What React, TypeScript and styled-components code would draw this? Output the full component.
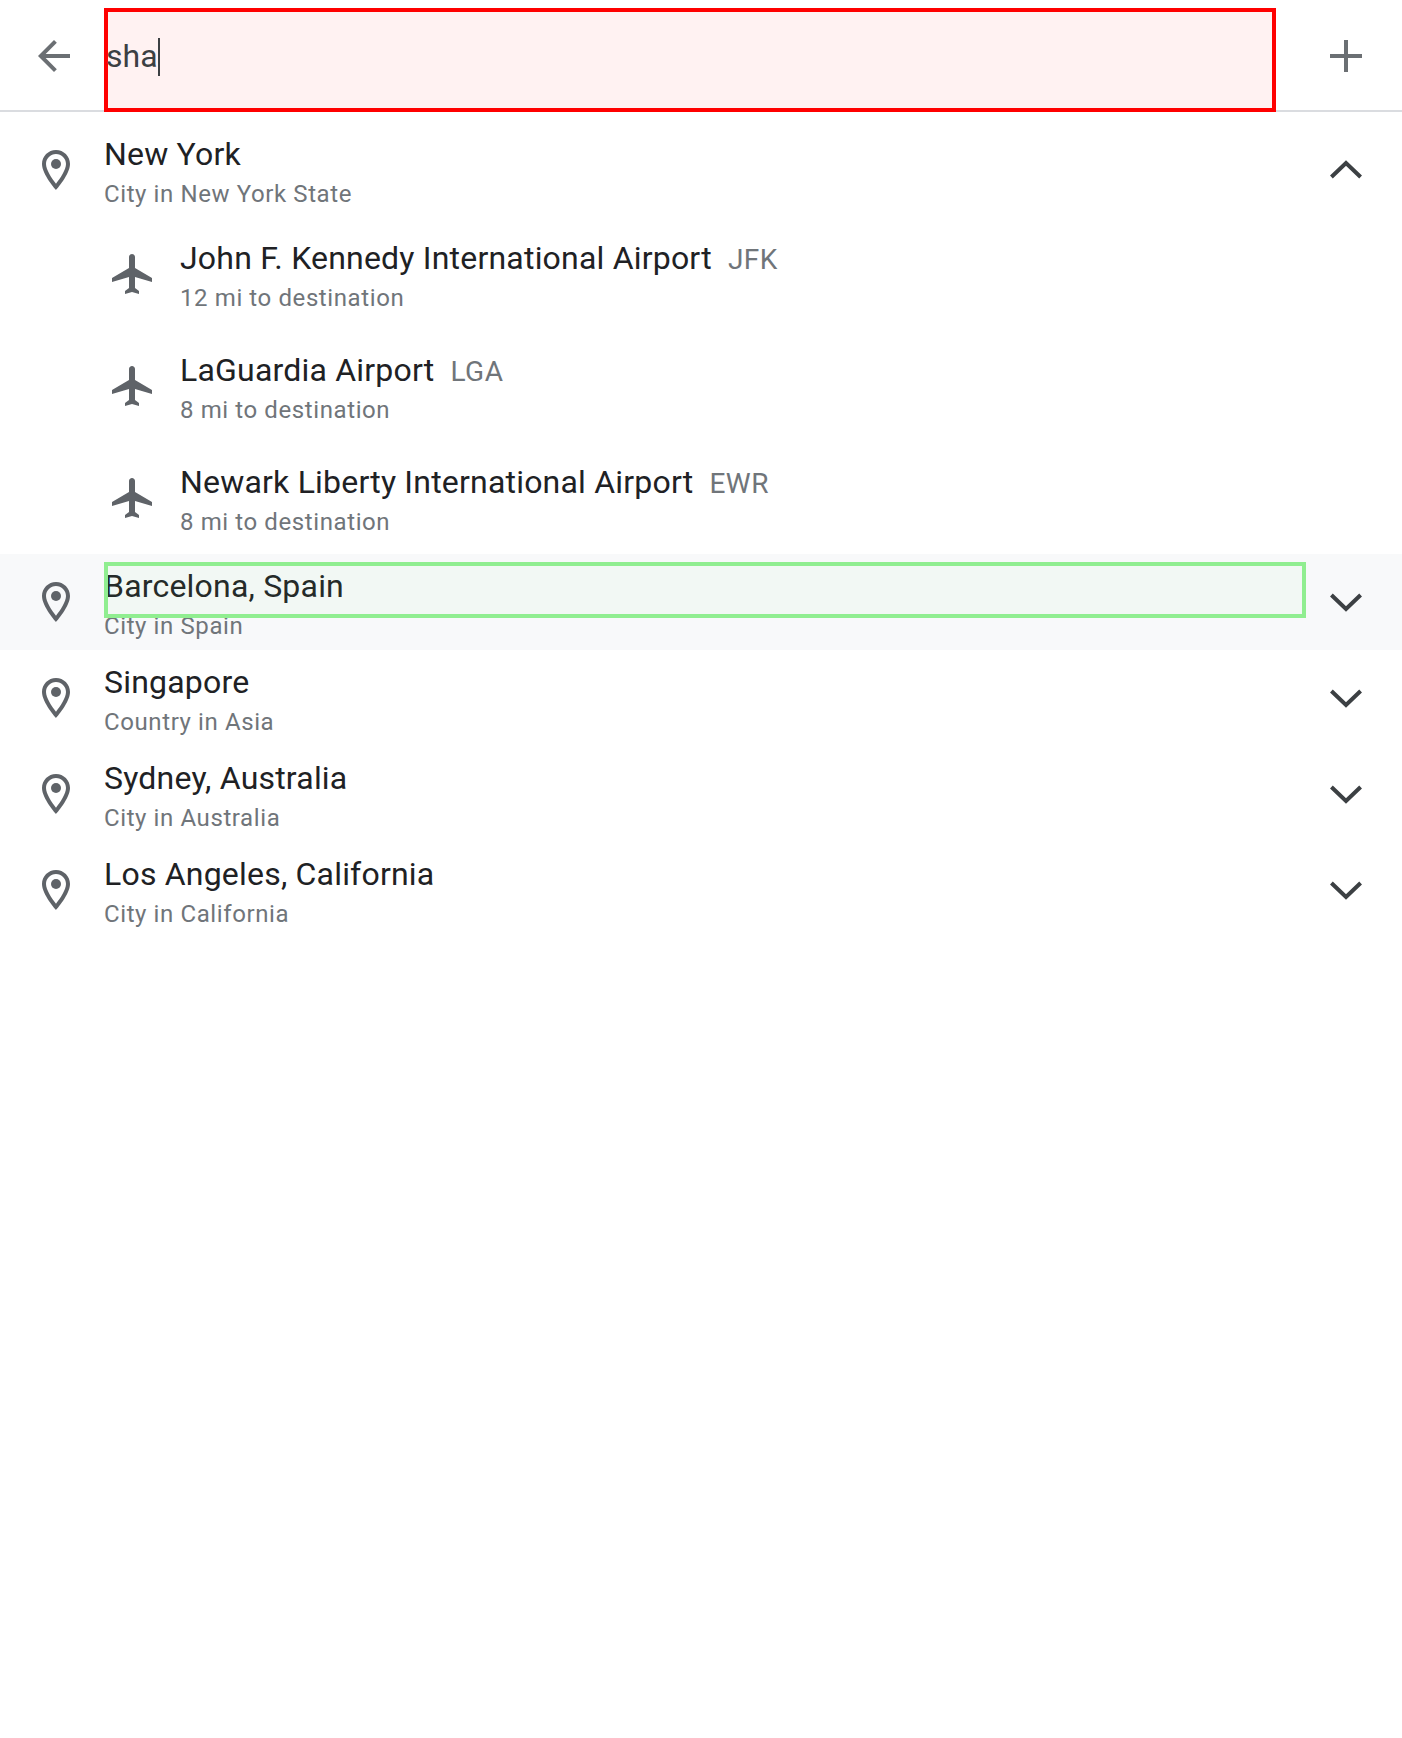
import React from "react"
import styled, { createGlobalStyle } from 'styled-components'

const GlobalStyle = createGlobalStyle`
  html, body {
    margin: 0;
    padding: 0;
    background: #ffffff;
    font-family: Roboto, "Liberation Sans", sans-serif;
  }
`

const Page = styled.div`
  width: 100%;
  min-height: 1738px;
  background: #ffffff;
`

const Header = styled.header`
  display: flex;
  align-items: flex-start;
  height: 112px;
  box-sizing: border-box;
  padding: 8px 32px 0 30px;
  box-shadow: inset 0 -2px 0 #dadce0;
`

const HeaderButton = styled.div`
  flex: none;
  width: 48px;
  height: 48px;
  margin-top: 24px;
  color: #6b6f73;
`

const SearchBox = styled.div`
  flex: 1;
  height: 104px;
  box-sizing: border-box;
  margin: 0 46px 0 26px;
  padding-top: 24px;
  border: 4px solid #ff0000;
  background: #fff2f2;
  font-size: 32px;
  line-height: 40px;
  text-indent: -2px;
  color: #3c4043;
`

const Caret = styled.span`
  display: inline-block;
  width: 2px;
  height: 38px;
  vertical-align: -9px;
  background: #3c4043;
`

const List = styled.div`
  padding-top: 10px;
`

const PlaceRow = styled.div<{ $active?: boolean }>`
  display: flex;
  align-items: center;
  height: 96px;
  padding: 0 32px;
  background: ${(props) => (props.$active ? '#f8f9fa' : 'transparent')};
`

const AirportRow = styled.div`
  display: flex;
  align-items: center;
  height: 112px;
  padding-left: 108px;
`

const RowIcon = styled.div`
  flex: none;
  width: 48px;
  height: 48px;
  margin-right: 24px;
  color: #5f6368;
`

const Chevron = styled.div`
  flex: none;
  width: 48px;
  height: 48px;
  margin-left: 16px;
  color: #3c4043;
`

const Texts = styled.div`
  flex: 1;
  min-width: 0;
  padding-top: 4px;
`

const AirportTexts = styled.div`
  flex: 1;
  min-width: 0;
  padding: 6px 0 2px;
`

const Title = styled.div<{ $marked?: boolean }>`
  position: relative;
  font-size: 32px;
  line-height: 40px;
  letter-spacing: 0.2px;
  color: #202124;

  ${(props) =>
    props.$marked &&
    `
    &::after {
      content: '';
      position: absolute;
      left: 0;
      right: 0;
      top: -4px;
      height: 56px;
      box-sizing: border-box;
      border: 4px solid #90ee90;
      background: rgba(144, 238, 144, 0.05);
    }
  `}
`

const Code = styled.span`
  margin-left: 16px;
  font-size: 28px;
  letter-spacing: 0.5px;
  color: #70757a;
`

const Sub = styled.div<{ $tight?: boolean }>`
  margin-top: ${(props) => (props.$tight ? 2 : 4)}px;
  font-size: 24px;
  line-height: 32px;
  letter-spacing: 0.6px;
  color: #70757a;
`

const Pin = () => (
  <svg width="48" height="48" viewBox="0 0 24 24" fill="currentColor">
    <path d="M12 2C8.13 2 5 5.13 5 9c0 5.25 7 13 7 13s7-7.75 7-13c0-3.87-3.13-7-7-7zM7 9c0-2.76 2.24-5 5-5s5 2.24 5 5c0 2.88-2.88 7.19-5 9.88C9.92 16.21 7 11.85 7 9z" />
    <circle cx="12" cy="9" r="2.5" />
  </svg>
)

const Plane = () => (
  <svg width="48" height="48" viewBox="0 0 24 24" fill="currentColor">
    <path d="M22 16v-2l-8.5-5V3.5C13.5 2.67 12.83 2 12 2s-1.5.67-1.5 1.5V9L2 14v2l8.5-2.5V19l-2 1.5V22l3.5-1 3.5 1v-1.5L13.5 19v-5.5L22 16z" />
  </svg>
)

const ArrowBack = () => (
  <svg width="48" height="48" viewBox="0 0 24 24" fill="currentColor">
    <path d="M20 11H7.83l5.59-5.59L12 4l-8 8 8 8 1.41-1.41L7.83 13H20v-2z" />
  </svg>
)

const Plus = () => (
  <svg width="48" height="48" viewBox="0 0 24 24" fill="currentColor">
    <path d="M20 13h-7v7h-2v-7H4v-2h7V4h2v7h7v2z" />
  </svg>
)

const ChevronIcon = ({ up }: { up?: boolean }) => (
  <svg width="48" height="48" viewBox="0 0 24 24" fill="none" stroke="currentColor" strokeWidth="2">
    <path d={up ? "M4.7 15.5 12 8.5l7.3 7" : "M4.7 8.5 12 15.5l7.3-7"} />
  </svg>
)

const airports = [
  { name: 'John F. Kennedy International Airport', code: 'JFK', distance: '12 mi to destination' },
  { name: 'LaGuardia Airport', code: 'LGA', distance: '8 mi to destination' },
  { name: 'Newark Liberty International Airport', code: 'EWR', distance: '8 mi to destination' },
]

const places = [
  { name: 'Barcelona, Spain', detail: 'City in Spain', active: true },
  { name: 'Singapore', detail: 'Country in Asia' },
  { name: 'Sydney, Australia', detail: 'City in Australia' },
  { name: 'Los Angeles, California', detail: 'City in California' },
]

const App: React.FC = () => {
  return (
    <Page>
      <GlobalStyle />
      <Header>
        <HeaderButton><ArrowBack /></HeaderButton>
        <SearchBox>sha<Caret /></SearchBox>
        <HeaderButton><Plus /></HeaderButton>
      </Header>
      <List>
        <PlaceRow>
          <RowIcon><Pin /></RowIcon>
          <Texts>
            <Title>New York</Title>
            <Sub>City in New York State</Sub>
          </Texts>
          <Chevron><ChevronIcon up /></Chevron>
        </PlaceRow>
        {airports.map((a) => (
          <AirportRow key={a.code}>
            <RowIcon><Plane /></RowIcon>
            <AirportTexts>
              <Title>{a.name}<Code>{a.code}</Code></Title>
              <Sub $tight>{a.distance}</Sub>
            </AirportTexts>
          </AirportRow>
        ))}
        {places.map((p) => (
          <PlaceRow key={p.name} $active={p.active}>
            <RowIcon><Pin /></RowIcon>
            <Texts>
              <Title $marked={p.active}>{p.name}</Title>
              <Sub>{p.detail}</Sub>
            </Texts>
            <Chevron><ChevronIcon /></Chevron>
          </PlaceRow>
        ))}
      </List>
    </Page>
  )
}

export default App
